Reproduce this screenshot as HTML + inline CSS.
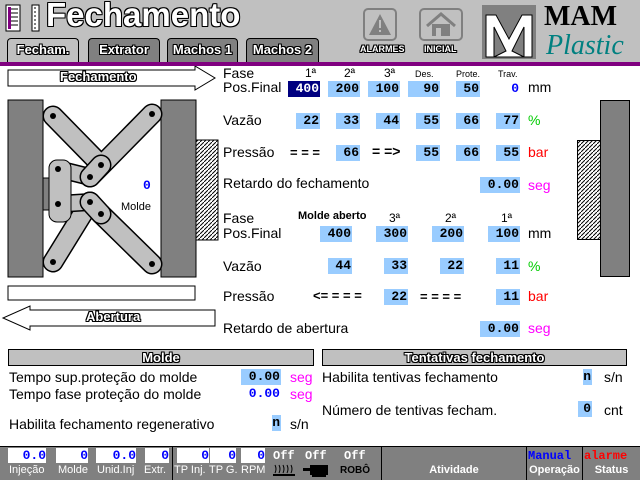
<!DOCTYPE html>
<html><head><meta charset="utf-8"><style>
*{margin:0;padding:0;box-sizing:border-box}
body{width:640px;height:480px;position:relative;background:#fff;font-family:"Liberation Sans",sans-serif;overflow:hidden}
.a{position:absolute;white-space:nowrap}
.l{font-size:14px;color:#000}
.v{position:absolute;background:#99ccff;font-family:"Liberation Mono",monospace;font-weight:bold;font-size:13px;text-align:right;height:16px;line-height:16px;padding-right:1px;color:#000}
.out{color:#fff;font-weight:bold;text-shadow:-1px 0 #000,1px 0 #000,0 -1px #000,0 1px #000,1px 1px #000,-1px -1px #000,1px -1px #000,-1px 1px #000}
.tab{position:absolute;top:38px;height:24px;border:1px solid #000;border-bottom:none;border-radius:4px 4px 0 0;font-size:13px;text-align:center;line-height:22px}
.wb{position:absolute;top:448px;height:15px;background:#fff;font-family:"Liberation Mono",monospace;font-weight:bold;font-size:13px;color:#0000ff;text-align:right;line-height:15px}
.bl{position:absolute;top:464px;font-size:11px;color:#fff}
.hd{position:absolute;top:349px;height:17px;background:#c0c0c0;border:1px solid #000;font-size:13px;text-align:center;line-height:15px}
</style></head><body>
<div class="a" style="left:0;top:0;width:640px;height:62px;background:#c0c0c0"></div>
<div class="a" style="left:0;top:62px;width:640px;height:4px;background:#800080"></div>
<svg class="a" style="left:5px;top:4px" width="40" height="28"><rect x="1" y="1" width="14" height="26" fill="#fff" stroke="#000"/><path d="M3 5 H13 M3 9 H13 M3 13 H13 M3 17 H13 M3 21 H13" stroke="#000"/><rect x="3" y="3" width="3" height="22" fill="#800080"/><rect x="27" y="1" width="7" height="26" fill="#fff" stroke="#000"/><path d="M30 3 V25" stroke="#000" stroke-dasharray="2 2"/></svg>
<div class="a out" style="left:46px;top:-4px;font-size:33px">Fechamento</div>
<div class="tab out" style="left:7px;width:72px;background:#c0c0c0">Fecham.</div>
<div class="tab out" style="left:88px;width:72px;background:#808080">Extrator</div>
<div class="tab out" style="left:167px;width:71px;background:#808080">Machos 1</div>
<div class="tab out" style="left:246px;width:73px;background:#808080">Machos 2</div>
<svg class="a" style="left:363px;top:8px" width="100" height="34"><rect x="1" y="1" width="32" height="31" rx="4" fill="none" stroke="#808080" stroke-width="2"/><path d="M17 6 L28 27 L6 27Z" fill="#808080"/><rect x="16" y="12" width="2" height="8" fill="#c0c0c0"/><rect x="16" y="22" width="2" height="2" fill="#c0c0c0"/><rect x="57" y="1" width="42" height="31" rx="4" fill="none" stroke="#808080" stroke-width="2"/><path d="M64 18 L78 6 L92 18" fill="none" stroke="#808080" stroke-width="3"/><rect x="69" y="16" width="18" height="12" fill="#808080"/><rect x="73" y="20" width="5" height="8" fill="#c0c0c0"/></svg>
<div class="a out" style="left:360px;top:44px;font-size:9px">ALARMES</div>
<div class="a out" style="left:424px;top:44px;font-size:9px">INICIAL</div>
<svg class="a" style="left:482px;top:5px" width="54" height="54"><rect width="54" height="54" fill="#808080"/><path d="M4 10 L14 10 L27 34 L40 10 L50 10 L50 52 L42 52 L42 22 L30 46 L42 52 L12 52 L24 46 L12 22 L12 52 L4 52Z" fill="#fff" stroke="#000"/></svg>
<div class="a" style="left:544px;top:1px;font-family:'Liberation Serif',serif;font-weight:bold;font-size:28px">MAM</div>
<div class="a" style="left:546px;top:30px;font-family:'Liberation Serif',serif;font-style:italic;font-size:28px;color:#008080">Plastic</div>

<!-- left diagram -->
<svg class="a" style="left:0;top:66px" width="222" height="266">
<path d="M8 4 L195 4 L195 0 L215 12 L195 24 L195 20 L8 20Z" fill="#fff" stroke="#000"/>
<rect x="8" y="34" width="35" height="177" fill="#808080" stroke="#000"/>
<rect x="161" y="34" width="35" height="177" fill="#808080" stroke="#000"/>
<defs><pattern id="h" width="4" height="4" patternUnits="userSpaceOnUse"><path d="M0 4 L4 0" stroke="#000" stroke-width="1"/></pattern></defs>
<rect x="196" y="74" width="22" height="100" fill="url(#h)" stroke="#000"/>
<rect x="43" y="112" width="6" height="32" fill="#808080" stroke="#000"/>
<g stroke-linecap="round">
<g stroke="#000" stroke-width="21"><path d="M53 50 L101 99 M152 48 L90 111 M53 196 L90 136 M152 198 L101 148"/></g>
<g stroke="#c0c0c0" stroke-width="18"><path d="M53 50 L101 99 M152 48 L90 111 M53 196 L90 136 M152 198 L101 148"/></g>
<g stroke="#000" stroke-width="18"><path d="M58 103 L90 111 M58 138 L90 136"/></g>
<g stroke="#c0c0c0" stroke-width="15"><path d="M58 103 L90 111 M58 138 L90 136"/></g>
</g>
<rect x="49" y="94" width="22" height="62" rx="8" fill="#c0c0c0" stroke="#000"/>
<g stroke="#000" stroke-width="21" stroke-linecap="round"><path d="M90 111 L101 99 M90 136 L101 148"/></g>
<g stroke="#c0c0c0" stroke-width="18" stroke-linecap="round"><path d="M90 111 L101 99 M90 136 L101 148"/></g>
<g fill="#000"><circle cx="53" cy="50" r="3"/><circle cx="152" cy="48" r="3"/><circle cx="101" cy="99" r="3"/><circle cx="90" cy="111" r="3"/><circle cx="58" cy="103" r="3"/><circle cx="58" cy="138" r="3"/><circle cx="90" cy="136" r="3"/><circle cx="101" cy="148" r="3"/><circle cx="53" cy="196" r="3"/><circle cx="152" cy="198" r="3"/></g>
<rect x="8" y="220" width="187" height="14" fill="#fff" stroke="#000"/>
<path d="M215 244 L30 244 L30 240 L3 252 L30 264 L30 260 L215 260Z" fill="#fff" stroke="#000"/>
</svg>
<div class="a out" style="left:60px;top:69px;font-size:13px">Fechamento</div>
<div class="a out" style="left:86px;top:309px;font-size:13px">Abertura</div>
<div class="a" style="left:143px;top:178px;font-family:'Liberation Mono',monospace;font-weight:bold;font-size:13px;color:#00f">0</div>
<div class="a" style="left:121px;top:201px;font-size:11px">Molde</div>

<!-- right plates -->
<div class="a" style="left:600px;top:100px;width:30px;height:177px;background:#808080;border:1px solid #000"></div>
<svg class="a" style="left:577px;top:140px" width="24" height="100"><defs><pattern id="h2" width="4" height="4" patternUnits="userSpaceOnUse"><path d="M0 4 L4 0" stroke="#000"/></pattern></defs><rect x="0.5" y="0.5" width="23" height="99" fill="url(#h2)" stroke="#000"/></svg>

<!-- upper table -->
<div class="a l" style="left:223px;top:65px">Fase</div>
<div class="a l" style="left:223px;top:79px">Pos.Final</div>
<div class="a" style="left:305px;top:66px;font-size:12px">1ª</div>
<div class="a" style="left:344px;top:66px;font-size:12px">2ª</div>
<div class="a" style="left:384px;top:66px;font-size:12px">3ª</div>
<div class="a" style="left:415px;top:69px;font-size:9px">Des.</div>
<div class="a" style="left:456px;top:69px;font-size:9px">Prote.</div>
<div class="a" style="left:498px;top:69px;font-size:9px">Trav.</div>
<div class="v" style="left:288px;top:81px;width:32px;background:#000080;color:#fff">400</div>
<div class="v" style="left:328px;top:81px;width:32px">200</div>
<div class="v" style="left:368px;top:81px;width:32px">100</div>
<div class="v" style="left:408px;top:81px;width:32px">90</div>
<div class="v" style="left:456px;top:81px;width:24px">50</div>
<div class="v" style="left:500px;top:81px;width:20px;background:none;color:#00f">0</div>
<div class="a l" style="left:528px;top:79px">mm</div>
<div class="a l" style="left:223px;top:112px">Vazão</div>
<div class="v" style="left:296px;top:113px;width:24px">22</div>
<div class="v" style="left:336px;top:113px;width:24px">33</div>
<div class="v" style="left:376px;top:113px;width:24px">44</div>
<div class="v" style="left:416px;top:113px;width:24px">55</div>
<div class="v" style="left:456px;top:113px;width:24px">66</div>
<div class="v" style="left:496px;top:113px;width:24px">77</div>
<div class="a l" style="left:528px;top:112px;color:#0c0">%</div>
<div class="a l" style="left:223px;top:144px">Pressão</div>
<div class="a" style="left:290px;top:145px;font-weight:bold;font-size:13px">= = =</div>
<div class="v" style="left:336px;top:145px;width:24px">66</div>
<div class="a" style="left:372px;top:143px;font-weight:bold;font-size:14px">= =&gt;</div>
<div class="v" style="left:416px;top:145px;width:24px">55</div>
<div class="v" style="left:456px;top:145px;width:24px">66</div>
<div class="v" style="left:496px;top:145px;width:24px">55</div>
<div class="a l" style="left:528px;top:144px;color:#f00">bar</div>
<div class="a l" style="left:223px;top:175px">Retardo do fechamento</div>
<div class="v" style="left:480px;top:177px;width:40px">0.00</div>
<div class="a l" style="left:528px;top:177px;color:#f0f">seg</div>

<!-- lower table -->
<div class="a l" style="left:223px;top:210px">Fase</div>
<div class="a l" style="left:223px;top:225px">Pos.Final</div>
<div class="a" style="left:298px;top:210px;font-size:11px;font-weight:bold">Molde aberto</div>
<div class="a" style="left:389px;top:211px;font-size:12px">3ª</div>
<div class="a" style="left:445px;top:211px;font-size:12px">2ª</div>
<div class="a" style="left:501px;top:211px;font-size:12px">1ª</div>
<div class="v" style="left:320px;top:226px;width:32px">400</div>
<div class="v" style="left:376px;top:226px;width:32px">300</div>
<div class="v" style="left:432px;top:226px;width:32px">200</div>
<div class="v" style="left:488px;top:226px;width:32px">100</div>
<div class="a l" style="left:528px;top:225px">mm</div>
<div class="a l" style="left:223px;top:258px">Vazão</div>
<div class="v" style="left:328px;top:258px;width:24px">44</div>
<div class="v" style="left:384px;top:258px;width:24px">33</div>
<div class="v" style="left:440px;top:258px;width:24px">22</div>
<div class="v" style="left:496px;top:258px;width:24px">11</div>
<div class="a l" style="left:528px;top:258px;color:#0c0">%</div>
<div class="a l" style="left:223px;top:288px">Pressão</div>
<div class="a" style="left:313px;top:288px;font-weight:bold;font-size:13px">&lt;= = = =</div>
<div class="v" style="left:384px;top:289px;width:24px">22</div>
<div class="a" style="left:420px;top:289px;font-weight:bold;font-size:13px">= = = =</div>
<div class="v" style="left:496px;top:289px;width:24px">11</div>
<div class="a l" style="left:528px;top:288px;color:#f00">bar</div>
<div class="a l" style="left:223px;top:320px">Retardo de abertura</div>
<div class="v" style="left:480px;top:321px;width:40px">0.00</div>
<div class="a l" style="left:528px;top:320px;color:#f0f">seg</div>

<!-- bottom sections -->
<div class="hd out" style="left:8px;width:306px">Molde</div>
<div class="hd out" style="left:322px;width:305px">Tentativas fechamento</div>
<div class="a l" style="left:9px;top:369px">Tempo sup.proteção do molde</div>
<div class="a l" style="left:9px;top:386px">Tempo fase proteção do molde</div>
<div class="a l" style="left:9px;top:416px">Habilita fechamento regenerativo</div>
<div class="v" style="left:241px;top:369px;width:40px">0.00</div>
<div class="v" style="left:241px;top:386px;width:40px;background:none;color:#00f">0.00</div>
<div class="a l" style="left:290px;top:369px;color:#f0f">seg</div>
<div class="a l" style="left:290px;top:386px;color:#f0f">seg</div>
<div class="v" style="left:272px;top:415px;width:9px">n</div>
<div class="a l" style="left:290px;top:416px">s/n</div>
<div class="a l" style="left:322px;top:369px">Habilita tentivas fechamento</div>
<div class="v" style="left:583px;top:369px;width:9px">n</div>
<div class="a l" style="left:604px;top:369px">s/n</div>
<div class="a l" style="left:322px;top:402px">Número de tentivas fecham.</div>
<div class="v" style="left:578px;top:401px;width:14px">0</div>
<div class="a l" style="left:604px;top:402px">cnt</div>

<!-- status bar -->
<div class="a" style="left:0;top:446px;width:640px;height:34px;background:#808080;border-top:1px solid #000"></div>
<div class="a" style="left:172px;top:446px;width:1px;height:34px;background:#000"></div>
<div class="a" style="left:381px;top:446px;width:1px;height:34px;background:#000"></div>
<div class="a" style="left:526px;top:446px;width:1px;height:34px;background:#000"></div>
<div class="a" style="left:582px;top:446px;width:1px;height:34px;background:#000"></div>
<div class="wb" style="left:8px;width:38px">0.0</div>
<div class="wb" style="left:56px;width:32px">0</div>
<div class="wb" style="left:96px;width:40px">0.0</div>
<div class="wb" style="left:145px;width:24px">0</div>
<div class="wb" style="left:177px;width:32px">0</div>
<div class="wb" style="left:210px;width:26px">0</div>
<div class="wb" style="left:241px;width:24px">0</div>
<div class="bl" style="left:9px">Injeção</div>
<div class="bl" style="left:58px">Molde</div>
<div class="bl" style="left:97px">Unid.Inj</div>
<div class="bl" style="left:144px">Extr.</div>
<div class="bl" style="left:174px">TP Inj.</div>
<div class="bl" style="left:209px">TP G.</div>
<div class="bl" style="left:241px">RPM</div>
<div class="a" style="left:273px;top:449px;font-family:'Liberation Mono',monospace;font-weight:bold;font-size:12px;color:#fff">Off</div>
<div class="a" style="left:305px;top:449px;font-family:'Liberation Mono',monospace;font-weight:bold;font-size:12px;color:#fff">Off</div>
<div class="a" style="left:344px;top:449px;font-family:'Liberation Mono',monospace;font-weight:bold;font-size:12px;color:#fff">Off</div>
<svg class="a" style="left:272px;top:463px" width="60" height="14"><path d="M3 10 q2-4 0-8 M7 10 q2-4 0-8 M11 10 q2-4 0-8 M15 10 q2-4 0-8 M19 10 q2-4 0-8" stroke="#000" fill="none"/><rect x="1" y="11" width="22" height="2" fill="#000"/><rect x="38" y="2" width="18" height="10" fill="#000"/><rect x="31" y="5" width="8" height="3" fill="#000"/><rect x="40" y="12" width="14" height="2" fill="#000"/></svg>
<div class="a" style="left:340px;top:465px;font-size:10px;font-weight:bold">ROBÔ</div>
<div class="bl" style="left:382px;width:144px;text-align:center;font-weight:bold">Atividade</div>
<div class="a" style="left:528px;top:449px;font-family:'Liberation Mono',monospace;font-weight:bold;font-size:12px;color:#00f">Manual</div>
<div class="bl" style="left:527px;width:55px;text-align:center;font-weight:bold">Operação</div>
<div class="a" style="left:584px;top:449px;font-family:'Liberation Mono',monospace;font-weight:bold;font-size:12px;color:#f00">alarme</div>
<div class="bl" style="left:583px;width:57px;text-align:center;font-weight:bold">Status</div>
</body></html>
